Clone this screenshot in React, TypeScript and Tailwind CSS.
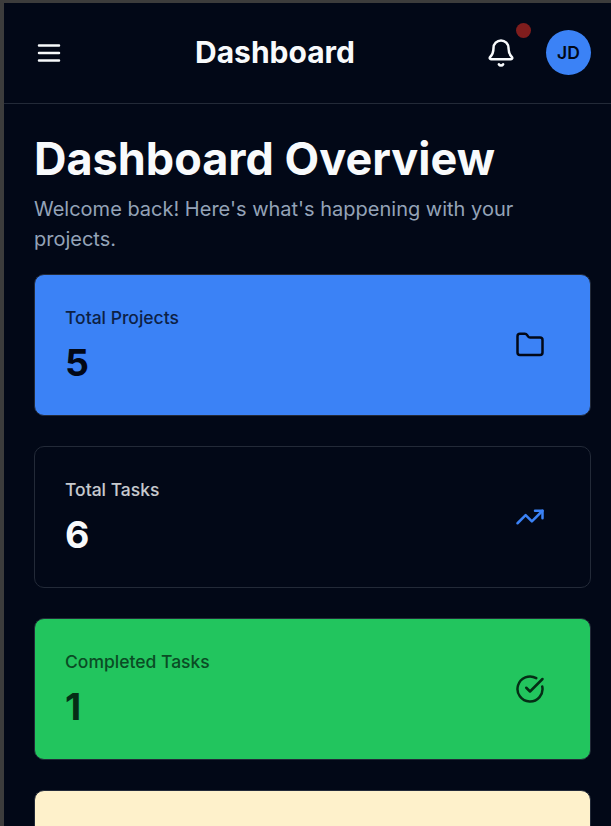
import type { ReactNode } from "react";

const stroke = {
  viewBox: "0 0 24 24",
  fill: "none",
  stroke: "currentColor",
  strokeWidth: 2,
  strokeLinecap: "round" as const,
  strokeLinejoin: "round" as const,
};

function Icon({ children }: { children: ReactNode }) {
  return (
    <svg {...stroke} className="block h-[30px] w-[30px] shrink-0">
      {children}
    </svg>
  );
}

type StatCardProps = {
  label: string;
  value: string;
  tone: string;
  iconTone?: string;
  icon: ReactNode;
};

function StatCard({ label, value, tone, iconTone = "", icon }: StatCardProps) {
  return (
    <section
      className={`flex h-[142px] shrink-0 items-center justify-between rounded-[10px] border border-[#232a38] p-[30px] ${tone}`}
    >
      <div className="flex flex-col gap-2.5">
        <p className="text-[17.5px] leading-[25px] font-medium opacity-80">{label}</p>
        <p className="text-[37.5px] leading-[45px] font-bold">{value}</p>
      </div>
      <div className={`p-[15px] ${iconTone}`}>
        <Icon>{icon}</Icon>
      </div>
    </section>
  );
}

export default function App() {
  return (
    <div className="h-[826px] w-[611px] overflow-hidden border-t-3 border-l-4 border-[#3c3c3c] bg-[#020817] font-['Inter',sans-serif] text-[#f8fafc]">
      <header className="flex h-[101px] items-center justify-between border-b border-[#232a38] pr-5 pl-[30px]">
        <button aria-label="Menu">
          <Icon>
            <path d="M4 6h16M4 12h16M4 18h16" />
          </Icon>
        </button>
        <h2 className="mb-0.5 text-[30px] leading-[36px] font-bold">Dashboard</h2>
        <div className="flex items-center gap-[30px]">
          <button aria-label="Notifications" className="relative">
            <Icon>
              <path d="M10.268 21a2 2 0 0 0 3.464 0" />
              <path d="M3.262 15.326A1 1 0 0 0 4 17h16a1 1 0 0 0 .74-1.673C19.41 13.956 18 12.499 18 8A6 6 0 0 0 6 8c0 4.499-1.411 5.956-2.738 7.326" />
            </Icon>
            <span className="absolute -top-[15px] -right-[15px] h-[15px] w-[15px] rounded-full bg-[#7f1d1d]" />
          </button>
          <div className="mb-px flex h-[45px] w-[45px] items-center justify-center rounded-full bg-[#3b82f6] text-[17.5px] leading-[25px] font-semibold text-[#020817]">
            JD
          </div>
        </div>
      </header>

      <main className="flex flex-col pt-[30px] pr-5 pl-[30px]">
        <h1 className="text-[45px] leading-[50px] font-bold">Dashboard Overview</h1>
        <p className="mt-2.5 text-[20px] leading-[30px] text-[#94a3b8]">
          Welcome back! Here's what's happening with your projects.
        </p>
        <div className="mt-5 flex flex-col gap-[30px]">
          <StatCard
            label="Total Projects"
            value="5"
            tone="bg-[#3b82f6] text-[#020817]"
            icon={
              <path d="M20 20a2 2 0 0 0 2-2V8a2 2 0 0 0-2-2h-7.9a2 2 0 0 1-1.69-.9L9.6 3.9A2 2 0 0 0 7.93 3H4a2 2 0 0 0-2 2v13a2 2 0 0 0 2 2Z" />
            }
          />
          <StatCard
            label="Total Tasks"
            value="6"
            tone="bg-[#020817] text-[#f8fafc]"
            iconTone="text-[#3b82f6]"
            icon={
              <>
                <path d="M16 7h6v6" />
                <path d="m22 7-8.5 8.5-5-5L2 17" />
              </>
            }
          />
          <StatCard
            label="Completed Tasks"
            value="1"
            tone="bg-[#22c55e] text-[#052e16]"
            icon={
              <>
                <path d="M21.801 10A10 10 0 1 1 17 3.335" />
                <path d="m9 11 3 3L22 4" />
              </>
            }
          />
          <div className="h-[142px] shrink-0 rounded-[10px] border border-[#232a38] bg-[#fef1cb]" />
        </div>
      </main>
    </div>
  );
}
